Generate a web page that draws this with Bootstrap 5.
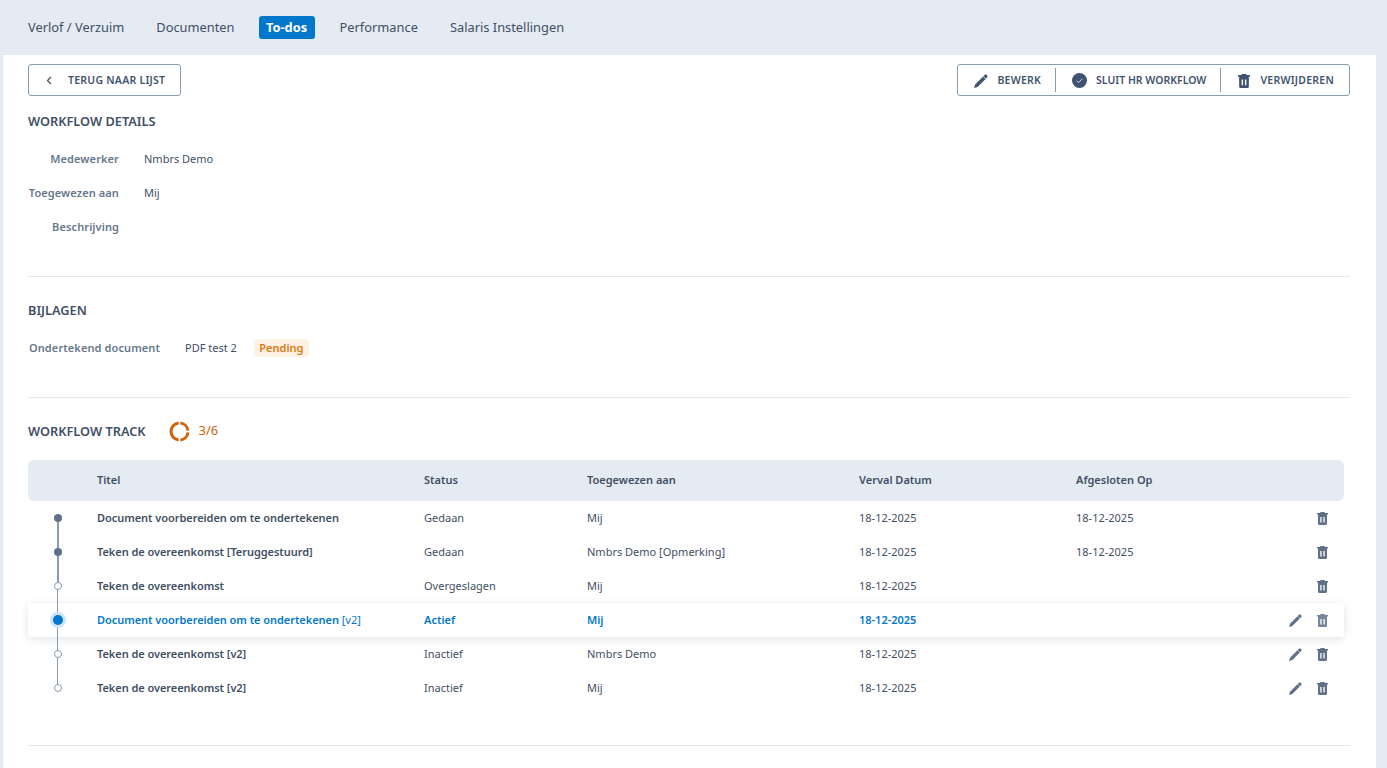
<!DOCTYPE html>
<html lang="nl">
  <head>
    <meta charset="UTF-8">
    <meta name="viewport" content="width=device-width, initial-scale=1.0">
    <title>Workflow details</title>
    <link href="https://cdn.jsdelivr.net/npm/bootstrap@5.3.0/dist/css/bootstrap.min.css" rel="stylesheet">
    <style>
      body {
        background-color: #e5ebf3;
        color: #3f4f63;
        font-family: "Noto Sans", Arial, sans-serif;
        font-size: 11px;
        overflow: hidden;
      }
      .tabs-bar { height: 55px; padding-left: 12px; }
      .tab-link {
        color: #3f4f63;
        font-size: 12.85px;
        padding: 2px 16px;
        border-radius: 3px;
        text-decoration: none;
      }
      .tab-link.is-active { background-color: #0277cc; color: #fff; font-weight: 700; margin: 0 9px 0 8px; padding: 2px 0; width: 56px; text-align: center; }
      .content-panel { background: #fff; margin: 0 11px 0 3px; padding: 9px 26px 0 25px; height: 713px; }
      .btn-outline-slate {
        height: 32px;
        border: 1px solid #8a9cb0;
        border-radius: 3px;
        background: #fff;
        color: #3f5470;
        font-size: 10.5px;
        font-weight: 600;
        letter-spacing: .25px;
        display: flex;
        align-items: center;
      }
      .back-btn { width: 153px; padding: 1px 0 0 17px; }
      .btn-part { height: 24px; display: flex; align-items: center; gap: 9px; padding: 1px 14px 0 16px; border-right: 1px solid #8a9cb0; }
      .btn-part.is-tight { letter-spacing: 0; }
      .btn-part:last-child { border-right: 0; gap: 10px; padding-left: 17px; padding-right: 15px; }
      .section-title { font-size: 12.75px; font-weight: 600; color: #3f5065; line-height: 16px; margin: 0; }
      .detail-row { height: 34px; display: flex; align-items: center; }
      .detail-label { width: 91px; text-align: right; font-weight: 600; color: #66778c; margin-right: 25px; letter-spacing: .1px; }
      .divider { border: 0; border-top: 1px solid #e5e9ef; opacity: 1; margin: 0; }
      .pending-tag { background: #fdf1e3; color: #dd7a11; font-weight: 600; border-radius: 4px; padding: 1px 5.5px; height: 18px; line-height: 16px; margin-left: 17px; }
      .track-count { color: #d2620a; font-size: 13px; }
      .track-table { width: 1316px; table-layout: fixed; margin: 0; border-collapse: separate; border-spacing: 0; --bs-table-bg: transparent; }
      .track-table th { background: #e5ebf3; height: 41px; padding: 0; border: 0; font-size: 11px; font-weight: 600; color: #3f4f63; vertical-align: middle; }
      .track-table th:first-child { border-radius: 6px 0 0 6px; }
      .track-table th:last-child { border-radius: 0 6px 6px 0; }
      .track-table td { height: 34px; padding: 0; border: 0; font-size: 11px; color: #3f4f63; vertical-align: middle; }
      .step-title { font-weight: 600; letter-spacing: -.05px; }
      .current-row td { color: #0277cc; font-weight: 600; background: #fff; }
      .current-row { box-shadow: 0 2px 8px rgba(60, 80, 110, .16); border-radius: 4px; }
      .current-row .plain-suffix { font-weight: 400; letter-spacing: 0; }
      .step-cell { position: relative; }
      .step-line { position: absolute; left: 29px; width: 1px; background: #8a9cb0; top: 0; bottom: 0; }
      .step-line.is-first { top: 17px; }
      .step-line.is-last { bottom: 17px; }
      .step-line.is-thick { width: 2px; }
      .step-line.is-upper { bottom: 17px; }
      .step-dot { position: absolute; left: 26px; top: 13px; width: 8px; height: 8px; border-radius: 50%; background: #5f7188; }
      .step-dot.is-open { background: #fff; border: 1px solid #8a9cb0; }
      .step-dot.is-current { left: 25px; top: 12px; width: 10px; height: 10px; background: #0277cc; box-shadow: 0 0 0 3px #cfe4f6; }
      .row-actions { display: flex; justify-content: flex-end; align-items: center; gap: 15px; padding-right: 16px; padding-top: 1px; }
      .row-actions svg { fill: #5f7188; display: block; }
      .current-row .row-actions svg:last-child { fill: #76879b; }
      .details-title { margin-top: 17px; }
      .details-rows { margin-top: 13px; }
      .bottom-rule-1 { margin-top: 32px; }
      .bijlagen-title { margin-top: 25px; }
      .attach-row { margin-top: 11px; padding-top: 4px; }
      .attach-label { width: auto; margin-left: 1px; }
      .second-rule { margin-top: 34px; }
      .track-head { height: 34px; margin: 16px 0 12px; }
      .track-ring { margin: 0 9px 0 23px; }
      .final-rule { margin-top: 40px; }
    </style>
  </head>
  <body>
    <svg width="0" height="0" class="position-absolute">
      <symbol id="ico-trash" viewBox="0 0 11 13"><path fill-rule="evenodd" d="M3.500 0h4l.5 1H11v1.500H10v9c0 .8-.6 1.500-1.400 1.500H2.400C1.600 13 1 12.300 1 11.500v-9H0V1h3zM3.300 5v5.500h1.300V5zm3.100 0v5.500h1.300V5z"/></symbol>
      <symbol id="ico-pencil" viewBox="0 0 14 14"><path d="M10.600.9c.6-.6 1.500-.6 2.100 0l.4.4c.6.6.6 1.500 0 2.100l-1.200 1.200-2.500-2.500zM9.100 2.400l2.500 2.500-8 8L0 14l1.100-3.600z"/></symbol>
    </svg>

    <nav class="tabs-bar d-flex align-items-center">
      <a class="tab-link" href="#">Verlof / Verzuim</a>
      <a class="tab-link" href="#">Documenten</a>
      <a class="tab-link is-active" href="#">To-dos</a>
      <a class="tab-link" href="#">Performance</a>
      <a class="tab-link" href="#">Salaris Instellingen</a>
    </nav>

    <main class="content-panel">
      <div class="d-flex justify-content-between">
        <button class="btn-outline-slate back-btn" type="button">
          <svg width="6" height="9" viewBox="0 0 6 9" class="me-3" fill="none" stroke="#3f4f63" stroke-width="1.200"><path d="M5 1 1.500 4.500 5 8"/></svg>
          TERUG NAAR LIJST
        </button>
        <div class="btn-outline-slate">
          <div class="btn-part">
            <svg width="14" height="14" fill="#3f5470"><use href="#ico-pencil"/></svg>BEWERK
          </div>
          <div class="btn-part is-tight">
            <svg width="15" height="15" viewBox="0 0 15 15"><circle cx="7.500" cy="7.500" r="7.500" fill="#3f5470"/><path d="M4.800 7.700 6.700 9.500 10.200 5.800" fill="none" stroke="#d5dde6" stroke-width="1"/></svg>SLUIT HR WORKFLOW
          </div>
          <div class="btn-part">
            <svg width="12" height="14" fill="#3f5470"><use href="#ico-trash"/></svg>VERWIJDEREN
          </div>
        </div>
      </div>

      <h2 class="section-title details-title">WORKFLOW DETAILS</h2>
      <div class="details-rows">
        <div class="detail-row"><span class="detail-label">Medewerker</span><span>Nmbrs Demo</span></div>
        <div class="detail-row"><span class="detail-label">Toegewezen aan</span><span>Mij</span></div>
        <div class="detail-row"><span class="detail-label">Beschrijving</span></div>
      </div>
      <hr class="divider bottom-rule-1">

      <h2 class="section-title bijlagen-title">BIJLAGEN</h2>
      <div class="detail-row attach-row">
        <span class="detail-label attach-label">Ondertekend document</span><span>PDF test 2</span><span class="pending-tag">Pending</span>
      </div>
      <hr class="divider second-rule">

      <div class="d-flex align-items-center track-head">
        <h2 class="section-title">WORKFLOW TRACK</h2>
        <svg width="21" height="21" viewBox="0 0 21 21" class="track-ring" fill="none" stroke="#d2620a" stroke-width="3">
          <circle cx="10.500" cy="10.500" r="8.500" pathLength="360" stroke-dasharray="78 12 78 12 168 12" stroke-dashoffset="-6" transform="rotate(-90 10.500 10.500)"/>
        </svg>
        <span class="track-count">3/6</span>
      </div>

      <table class="table track-table">
        <colgroup><col style="width:69px"><col style="width:327px"><col style="width:163px"><col style="width:272px"><col style="width:217px"><col style="width:170px"><col></colgroup>
        <thead>
          <tr><th></th><th>Titel</th><th>Status</th><th>Toegewezen aan</th><th>Verval Datum</th><th>Afgesloten Op</th><th></th></tr>
        </thead>
        <tbody>
          <tr>
            <td class="step-cell"><span class="step-line is-first is-thick"></span><span class="step-dot"></span></td>
            <td class="step-title">Document voorbereiden om te ondertekenen</td><td>Gedaan</td><td>Mij</td><td>18-12-2025</td><td>18-12-2025</td>
            <td><div class="row-actions"><svg width="11" height="13"><use href="#ico-trash"/></svg></div></td>
          </tr>
          <tr>
            <td class="step-cell"><span class="step-line is-thick"></span><span class="step-dot"></span></td>
            <td class="step-title">Teken de overeenkomst [Teruggestuurd]</td><td>Gedaan</td><td>Nmbrs Demo [Opmerking]</td><td>18-12-2025</td><td>18-12-2025</td>
            <td><div class="row-actions"><svg width="11" height="13"><use href="#ico-trash"/></svg></div></td>
          </tr>
          <tr>
            <td class="step-cell"><span class="step-line"></span><span class="step-line is-thick is-upper"></span><span class="step-dot is-open"></span></td>
            <td class="step-title">Teken de overeenkomst</td><td>Overgeslagen</td><td>Mij</td><td>18-12-2025</td><td></td>
            <td><div class="row-actions"><svg width="11" height="13"><use href="#ico-trash"/></svg></div></td>
          </tr>
          <tr class="current-row">
            <td class="step-cell"><span class="step-line"></span><span class="step-dot is-current"></span></td>
            <td class="step-title">Document voorbereiden om te ondertekenen <span class="plain-suffix">[v2]</span></td><td>Actief</td><td>Mij</td><td>18-12-2025</td><td></td>
            <td><div class="row-actions"><svg width="13" height="13"><use href="#ico-pencil"/></svg><svg width="11" height="13"><use href="#ico-trash"/></svg></div></td>
          </tr>
          <tr>
            <td class="step-cell"><span class="step-line"></span><span class="step-dot is-open"></span></td>
            <td class="step-title">Teken de overeenkomst [v2]</td><td>Inactief</td><td>Nmbrs Demo</td><td>18-12-2025</td><td></td>
            <td><div class="row-actions"><svg width="13" height="13"><use href="#ico-pencil"/></svg><svg width="11" height="13"><use href="#ico-trash"/></svg></div></td>
          </tr>
          <tr>
            <td class="step-cell"><span class="step-line is-last"></span><span class="step-dot is-open"></span></td>
            <td class="step-title">Teken de overeenkomst [v2]</td><td>Inactief</td><td>Mij</td><td>18-12-2025</td><td></td>
            <td><div class="row-actions"><svg width="13" height="13"><use href="#ico-pencil"/></svg><svg width="11" height="13"><use href="#ico-trash"/></svg></div></td>
          </tr>
        </tbody>
      </table>
      <hr class="divider final-rule">
    </main>

    <script src="https://cdn.jsdelivr.net/npm/bootstrap@5.3.0/dist/js/bootstrap.bundle.min.js"></script>
  </body>
</html>
